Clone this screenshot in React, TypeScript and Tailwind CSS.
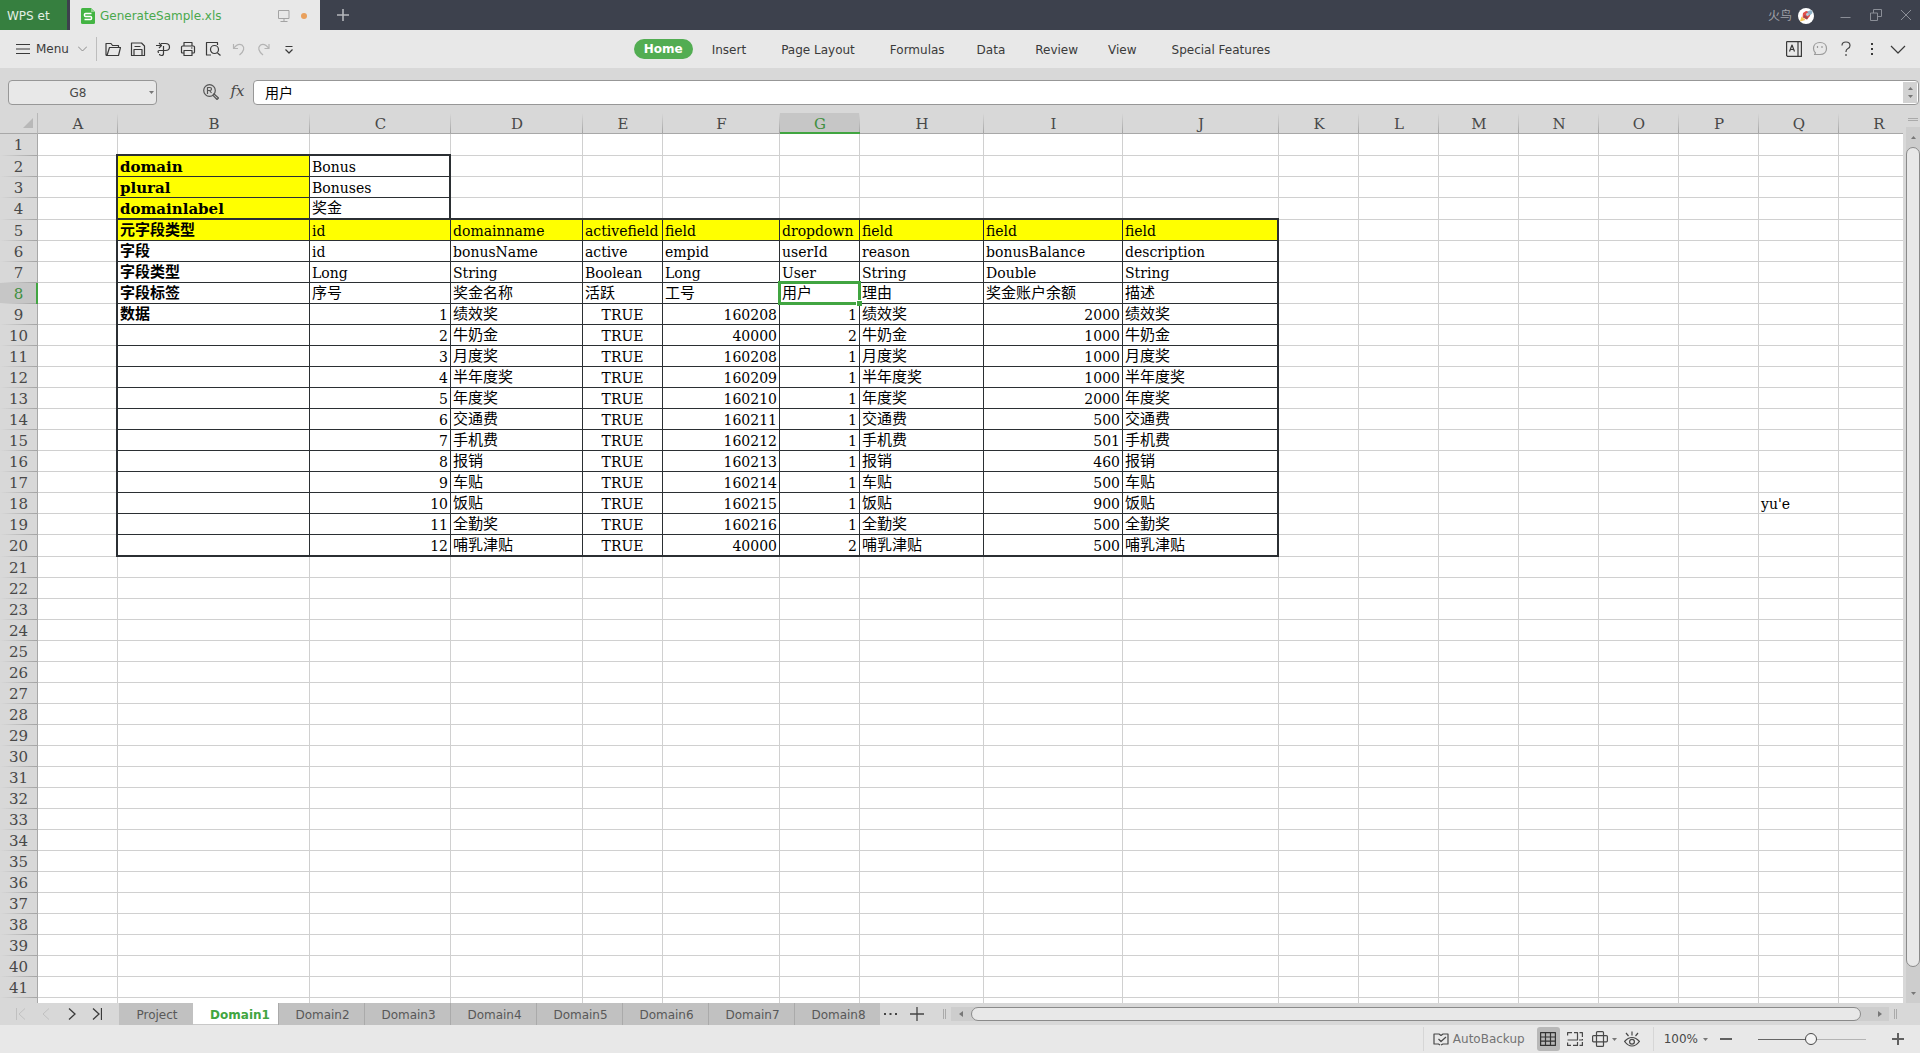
import React from "react";

const ui = "font-['DejaVu_Sans','Noto_Sans_CJK_SC',sans-serif]";

const columns = [
  { name: "A", width: "w-[80px]" },
  { name: "B", width: "w-[192px]" },
  { name: "C", width: "w-[141px]" },
  { name: "D", width: "w-[132px]" },
  { name: "E", width: "w-[80px]" },
  { name: "F", width: "w-[117px]" },
  { name: "G", width: "w-[80px]" },
  { name: "H", width: "w-[124px]" },
  { name: "I", width: "w-[139px]" },
  { name: "J", width: "w-[156px]" },
  { name: "K", width: "w-[80px]" },
  { name: "L", width: "w-[80px]" },
  { name: "M", width: "w-[80px]" },
  { name: "N", width: "w-[80px]" },
  { name: "O", width: "w-[80px]" },
  { name: "P", width: "w-[80px]" },
  { name: "Q", width: "w-[80px]" },
  { name: "R", width: "" },
];

const ROW_COUNT = 41;

const cells: Record<number, Record<string, string>> = {
  2: { B: "domain", C: "Bonus" },
  3: { B: "plural", C: "Bonuses" },
  4: { B: "domainlabel", C: "奖金" },
  5: { B: "元字段类型", C: "id", D: "domainname", E: "activefield", F: "field", G: "dropdown", H: "field", I: "field", J: "field" },
  6: { B: "字段", C: "id", D: "bonusName", E: "active", F: "empid", G: "userId", H: "reason", I: "bonusBalance", J: "description" },
  7: { B: "字段类型", C: "Long", D: "String", E: "Boolean", F: "Long", G: "User", H: "String", I: "Double", J: "String" },
  8: { B: "字段标签", C: "序号", D: "奖金名称", E: "活跃", F: "工号", G: "用户", H: "理由", I: "奖金账户余额", J: "描述" },
};

const records: [string, string, string, string][] = [
  ["绩效奖", "160208", "1", "2000"],
  ["牛奶金", "40000", "2", "1000"],
  ["月度奖", "160208", "1", "1000"],
  ["半年度奖", "160209", "1", "1000"],
  ["年度奖", "160210", "1", "2000"],
  ["交通费", "160211", "1", "500"],
  ["手机费", "160212", "1", "501"],
  ["报销", "160213", "1", "460"],
  ["车贴", "160214", "1", "500"],
  ["饭贴", "160215", "1", "900"],
  ["全勤奖", "160216", "1", "500"],
  ["哺乳津贴", "40000", "2", "500"],
];

records.forEach(([name, emp, user, balance], i) => {
  cells[9 + i] = { C: String(i + 1), D: name, E: "TRUE", F: emp, G: user, H: name, I: balance, J: name };
});
cells[9].B = "数据";
cells[18].Q = "yu'e";

function edgeShadow(row: number, col: string) {
  if (col === "B") {
    if (row === 2) return "shadow-[-2px_0_0_#2b2f33,0_-2px_0_#2b2f33,-2px_-2px_0_#2b2f33]";
    if (row === 5) return "shadow-[-2px_0_0_#2b2f33,0_-2px_0_#2b2f33]";
    if (row === 20) return "shadow-[-2px_0_0_#2b2f33,inset_0_-1px_0_#2b2f33]";
    return "shadow-[-2px_0_0_#2b2f33]";
  }
  if (col === "C" && row === 2) return "shadow-[0_-2px_0_#2b2f33,inset_-1px_0_0_#2b2f33]";
  if (col === "C" && row < 5) return "shadow-[inset_-1px_0_0_#2b2f33]";
  if (col === "J" && row === 5) return "shadow-[0_-2px_0_#2b2f33,inset_-1px_0_0_#2b2f33]";
  if (col === "J" && row === 20) return "shadow-[inset_-1px_-1px_0_#2b2f33]";
  if (col === "J") return "shadow-[inset_-1px_0_0_#2b2f33]";
  if (row === 5) return "shadow-[0_-2px_0_#2b2f33]";
  if (row === 20) return "shadow-[inset_0_-1px_0_#2b2f33]";
  return "";
}

function Cell({ row, col }: { row: number; col: string }) {
  const text = cells[row]?.[col] ?? "";
  const inTable = (row >= 2 && row <= 4 && (col === "B" || col === "C")) || (row >= 5 && row <= 20 && col >= "B" && col <= "J");
  const yellow = (row === 5 && inTable) || (row >= 2 && row <= 4 && col === "B");
  const numeric = row >= 9 && /^\d+$/.test(text);
  const cjk = /[\u4e00-\u9fff]/.test(text);
  const selected = row === 8 && col === "G";
  return (
    <td
      className={[
        "relative p-0 border-r border-b align-top whitespace-nowrap",
        inTable ? "border-[#2b2f33]" : "border-[#d0d0d0]",
        inTable ? edgeShadow(row, col) : "",
        yellow ? "bg-[#ffff00]" : inTable ? "bg-white" : "",
        numeric ? "text-right" : text === "TRUE" ? "text-center" : "text-left",
      ].join(" ")}
    >
      <div
        className={[
          "h-5 px-[2px] text-black",
          cjk ? "font-['Noto_Sans_CJK_SC',sans-serif] leading-[18px]" : "font-['DejaVu_Serif',serif] leading-[22px]",
          col === "B" ? "text-[15px] font-bold" : cjk ? "text-[15px]" : "text-[14px]",
        ].join(" ")}
      >
        {text}
      </div>
      {selected && (
        <div className="absolute -inset-[2px] z-10 border-[3px] border-[#41a541]">
          <span className="absolute -right-1 -bottom-1 size-[6px] border-t border-l border-white bg-[#41a541]" />
        </div>
      )}
    </td>
  );
}

function Sheet() {
  return (
    <table className="w-[calc(100%+16px)] table-fixed border-separate border-spacing-0 font-['DejaVu_Serif',serif] text-[15px] text-[#484848]">
      <colgroup>
        <col className="w-[38px]" />
        {columns.map((c) => (
          <col key={c.name} className={c.width} />
        ))}
      </colgroup>
      <thead>
        <tr className="h-[21px] bg-[#d8d8d8]">
          <th className="border-r border-b border-r-[#b8b8b8] border-b-[#a8a8a8] p-0" aria-label="Select all">
            <svg className="ml-[23px] block" width="10" height="10" viewBox="0 0 10 10">
              <path d="M10 0V10H0Z" fill="#b8b8b8" />
            </svg>
          </th>
          {columns.map((c) => (
            <th
              key={c.name}
              className={[
                "border-b p-0 text-center align-top text-[15px] font-normal bg-[linear-gradient(to_bottom,#d8d8d8,#a4a4a4)] bg-[length:1px_100%] bg-right bg-no-repeat",
                c.name === "G" ? "border-[#41a541] bg-[#c6c6c6] text-[#3f8f3f] shadow-[inset_0_-1px_0_#41a541]" : "border-[#a8a8a8]",
              ].join(" ")}
            >
              <div className="h-5 leading-[22px]">{c.name}</div>
            </th>
          ))}
        </tr>
      </thead>
      <tbody>
        {Array.from({ length: ROW_COUNT }, (_, i) => i + 1).map((row) => (
          <tr key={row} className={row === 1 || row === 4 || row === 20 ? "h-[22px]" : "h-[21px]"}>
            <th
              className={[
                "border-r p-0 text-center align-top text-[15px] font-normal bg-[linear-gradient(to_right,#d8d8d8,#a4a4a4)] bg-[length:100%_1px] bg-bottom bg-no-repeat",
                row === 8
                  ? "border-[#41a541] bg-[#c6c6c6] text-[#3f8f3f] shadow-[inset_-1px_0_0_#41a541]"
                  : "border-[#a8a8a8] bg-[#d8d8d8]",
              ].join(" ")}
            >
              <div className="h-5 leading-[22px]">{row}</div>
            </th>
            {columns.map((c) => (
              <Cell key={c.name} row={row} col={c.name} />
            ))}
          </tr>
        ))}
        <tr className="h-[21px]">
          <th className="border-r border-[#a8a8a8] bg-[#d8d8d8] p-0" />
          {columns.map((c) => (
            <td key={c.name} className="border-r border-[#d0d0d0] p-0" />
          ))}
        </tr>
      </tbody>
    </table>
  );
}

type IconProps = { children: React.ReactNode; size?: string; box?: string; className?: string };
function Icon({ children, size = "size-4", box = "0 0 16 16", className = "" }: IconProps) {
  return (
    <svg className={`${size} shrink-0 ${className}`} viewBox={box} fill="none" stroke="currentColor" strokeWidth="1.2" strokeLinejoin="round">
      {children}
    </svg>
  );
}

function TitleBar() {
  return (
    <header className="flex h-[30px] shrink-0 items-stretch bg-[#3d414d] text-[12px]">
      <button className="w-[67px] bg-[#367f3f] pt-[2px] pl-[7px] text-left text-[#e3efe4]">WPS et</button>
      <div className="ml-[3px] flex w-[250px] items-center bg-[#e8e8e8] pt-[2px] pl-[11px]">
        <svg width="14" height="16" viewBox="0 0 14 16">
          <path d="M1.500 0H10L14 4V14.500Q14 16 12.500 16H1.500Q0 16 0 14.500V1.500Q0 0 1.500 0Z" fill="#43b443" />
          <path d="M10 0V4H14Z" fill="#8fd28f" />
          <path d="M10.500 5.500H4.500Q3.500 5.500 3.500 6.500V7.500Q3.500 8.500 4.500 8.500H9.500Q10.500 8.500 10.500 9.500V10.500Q10.500 11.500 9.500 11.500H3.500" fill="none" stroke="#fff" strokeWidth="1.500" />
        </svg>
        <span className="ml-[5px] text-[#4aa84d]">GenerateSample.xls</span>
        <svg className="ml-auto" width="12" height="12" viewBox="0 0 12 12" fill="none" stroke="#a3a3a3">
          <path d="M1 .5H11V8.500H.5V.5ZM6 8.500V11.500M2.500 11.500H9.500" />
        </svg>
        <span className="mr-[13px] ml-[11px] size-[6px] rounded-full bg-[#e9a05c]" />
      </div>
      <button aria-label="New tab" className="ml-[16px] text-[#b5b7bc]">
        <svg width="14" height="14" viewBox="0 0 14 14" stroke="currentColor" strokeWidth="1.600">
          <path d="M7 1V13M1 7H13" />
        </svg>
      </button>
      <div className="ml-auto flex items-center text-[#8b8e97]">
        <span className="pt-[2px] text-[#a0a2a9]">火鸟</span>
        <svg className="mt-px ml-[6px]" width="16" height="16" viewBox="0 0 16 16">
          <circle cx="8" cy="8" r="8" fill="#fff" />
          <path d="M5 5L8 3L12 3.500L12 8L9 11.500L4.500 9.500Z" fill="#e2504a" />
          <path d="M9 3.500L13.500 2L14.500 5L12 7.500Z" fill="#8fb2c8" />
          <path d="M6.500 7L10 9.500L9 11.500L5.500 9Z" fill="#9a4a50" />
          <circle cx="9.500" cy="6.500" r="1.400" fill="#a9d3e8" />
          <path d="M2 13.500L3.500 8.500L7.500 12Z" fill="#f6c553" />
        </svg>
        <button aria-label="Minimize" className="ml-[26px]">
          <svg width="11" height="16" viewBox="0 0 11 16" stroke="currentColor"><path d="M.5 10.500H10.500" /></svg>
        </button>
        <button aria-label="Restore" className="ml-[19px]">
          <svg width="12" height="12" viewBox="0 0 12 12" fill="none" stroke="currentColor">
            <path d="M1.500 4H7.500V11.500H.5V4ZM3.500 4V.5H11.500V7.500H7.500" />
          </svg>
        </button>
        <button aria-label="Close" className="mr-[9px] ml-[19px]">
          <svg width="10" height="10" viewBox="0 0 10 10" stroke="currentColor"><path d="M0 0L10 10M10 0L0 10" /></svg>
        </button>
      </div>
    </header>
  );
}

const menus = [
  { name: "Insert", pad: "" },
  { name: "Page Layout", pad: "px-[5px]" },
  { name: "Formulas", pad: "" },
  { name: "Data", pad: "pl-[2px]" },
  { name: "Review", pad: "" },
  { name: "View", pad: "" },
  { name: "Special Features", pad: "pl-[5px]" },
];

function MenuBar() {
  return (
    <div className="flex h-[38px] shrink-0 items-center bg-[#e8e8e8] text-[12px] text-[#3a3a3a]">
      <div className="flex flex-1 basis-0 items-center pl-4">
        <button className="flex items-center gap-[6px]">
          <svg width="14" height="10" viewBox="0 0 14 10" stroke="currentColor"><path d="M0 .5H14M0 5H14M0 9.500H14" /></svg>
          Menu
          <svg className="ml-[3px] text-[#8a8a8a]" width="9" height="6" viewBox="0 0 9 6" fill="none" stroke="currentColor"><path d="M0 .5L4.500 5L9 .5" /></svg>
        </button>
        <span className="ml-[9px] h-6 w-px bg-[#bdbdbd]" />
        <div className="ml-[8px] flex items-center gap-[9px]">
          <button aria-label="Open">
            <Icon><path d="M3 14.500H2Q1 14.500 1 13.500V2.500H6L7.500 4.500H13.500V6.500M2 14.500L4.500 6.500H15.500L13.500 14.500H2" /></Icon>
          </button>
          <button aria-label="Save">
            <Icon><path d="M1.500 2H11.500L14.500 5V14.500H1.500ZM4 14.500V8.500H12V14.500M4.500 5.500H10.500" /></Icon>
          </button>
          <button aria-label="Export">
            <Icon><path d="M1 4.500H6.500M4 2L6.500 4.500L4 7M6 2.500H10.500Q14.500 2.500 14.500 6T10.500 9.500H4Q3 9.500 3 10.500T4 11.500M8.500 5V12.500Q8.500 14.500 6.500 14.500T4.500 13" /></Icon>
          </button>
          <button aria-label="Print">
            <Icon><path d="M4 5V1.500H12V5M4 12H2.500Q1.500 12 1.500 11V6Q1.500 5 2.500 5H13.500Q14.500 5 14.500 6V11Q14.500 12 13.500 12H12M4 9.500H12V14.500H4ZM11 7H12.500" /></Icon>
          </button>
          <button aria-label="Print preview">
            <Icon><path d="M6 14H1.500V1.500H12.500V4M12.500 12L15.500 14.500" /><circle cx="9.500" cy="8.500" r="4" /></Icon>
          </button>
          <button aria-label="Undo" className="ml-[1px] text-[#b4b4b4]">
            <Icon><path d="M2.500 3V7.500H7M2.500 7.500Q7 1.500 11 4Q15.500 8 8.500 14" /></Icon>
          </button>
          <button aria-label="Redo" className="text-[#b4b4b4]">
            <Icon><path d="M13 3V7.500H8.500M13 7.500Q8.500 1.500 4.500 4Q0 8 7 14" /></Icon>
          </button>
          <button aria-label="More tools">
            <Icon><path d="M4.500 5.500H11.500M4.500 8.500L8 12L11.500 8.500" /></Icon>
          </button>
        </div>
      </div>
      <nav className="mr-[18px] flex items-center gap-[30px]">
        <button className="-mr-[11px] h-5 rounded-full bg-[#52ad52] px-[10px] font-bold text-white">Home</button>
        {menus.map((m) => (
          <button key={m.name} className={`pt-px ${m.pad}`}>{m.name}</button>
        ))}
      </nav>
      <div className="flex flex-1 basis-0 items-center justify-end pr-[14px]">
        <button aria-label="Translate">
          <Icon><path d="M1 .6H15.400V15.400H1.500L.6 14.500V1ZM12 .6V15.400M3.500 10.500L6 4L8.500 10.500M4.500 8.500H7.500" /></Icon>
        </button>
        <button aria-label="Feedback" className="ml-[10px] text-[#9a9a9a]">
          <Icon><path d="M8 1.500C12 1.500 14.500 4 14.500 7.500S12 13.500 8 13.500H2.500L3.500 12Q1.500 10 1.500 7.500C1.500 4 4 1.500 8 1.500ZM5.500 5V7M10 5V7" /></Icon>
        </button>
        <button aria-label="Help" className="ml-[10px]">
          <Icon className="text-[#444]"><path d="M4 4.500Q4 1 8 1T12 4.500Q12 6.500 10 7.500T8 10.500V11M8 13V15" /></Icon>
        </button>
        <button aria-label="More" className="ml-[10px]">
          <Icon><path d="M8 2V4M8 7V9M8 12V14" strokeWidth="2" /></Icon>
        </button>
        <button aria-label="Collapse ribbon" className="ml-[10px]">
          <Icon><path d="M1 5L8 12L15 5" /></Icon>
        </button>
      </div>
    </div>
  );
}

function FormulaBar() {
  return (
    <div className="flex h-[45px] shrink-0 items-start bg-[#d8d8d8] pt-3 pr-px pl-2">
      <div className="flex h-[25px] w-[149px] items-center rounded-[4px] border border-[#979797] bg-[#e8e8e8]">
        <input aria-label="Name box" defaultValue="G8" className="min-w-0 flex-1 bg-transparent pr-[2px] text-center text-[12px] text-[#484848] outline-none" />
        <button aria-label="Cell names" className="pr-[2px]">
          <svg width="5" height="3" viewBox="0 0 5 3"><path d="M0 0H5L2.500 3Z" fill="#777" /></svg>
        </button>
      </div>
      <button aria-label="Find" className="mt-1 ml-[46px] text-[#555]">
        <Icon>
          <circle cx="6.500" cy="6.500" r="5.800" />
          <path d="M4.500 10V3.500H7Q8.500 3.500 8.500 5T7 6.500H4.500M6.500 6.500L8.500 9M10.500 9.500L15.500 14L14 15.500L9.500 10.800" />
        </Icon>
      </button>
      <button aria-label="Insert function" className="ml-[10px] h-[22px] w-[17px] font-['DejaVu_Serif',serif] text-[15px] italic leading-[22px] text-[#484848]">fx</button>
      <div className="ml-[7px] flex h-[25px] flex-1 items-stretch rounded-[4px] border border-[#979797] bg-white p-px">
        <input aria-label="Formula" defaultValue="用户" className="min-w-0 flex-1 bg-transparent pl-[10px] font-['Noto_Sans_CJK_SC',sans-serif] text-[14px] text-black outline-none" />
        <div className="flex w-[14px] flex-col items-center justify-center gap-[5px] bg-[#d2d2d2]">
          <svg width="5" height="3" viewBox="0 0 5 3"><path d="M0 3H5L2.500 0Z" fill="#777" /></svg>
          <svg width="5" height="3" viewBox="0 0 5 3"><path d="M0 0H5L2.500 3Z" fill="#777" /></svg>
        </div>
      </div>
    </div>
  );
}

function VerticalScroll() {
  return (
    <div className="flex w-[17px] shrink-0 flex-col bg-[#d8d8d8] pl-[3px]">
      <div className="mt-[5px] ml-[2px] h-[3px] w-[10px] border-y border-[#aaa]" />
      <div className="mt-[6px] flex flex-1 flex-col items-center bg-[#cdcdcd]">
        <button aria-label="Scroll up" className="flex h-5 w-full items-center justify-center">
          <svg width="5" height="3" viewBox="0 0 5 3"><path d="M0 3H5L2.500 0Z" fill="#777" /></svg>
        </button>
        <div className="w-[14px] flex-1 rounded-full border border-[#8a8a8a] bg-[#e8e8e8]" />
        <button aria-label="Scroll down" className="flex h-9 w-full items-center justify-center pt-4">
          <svg width="5" height="3" viewBox="0 0 5 3"><path d="M0 0H5L2.500 3Z" fill="#777" /></svg>
        </button>
      </div>
    </div>
  );
}

const otherTabs = ["Domain2", "Domain3", "Domain4", "Domain5", "Domain6", "Domain7", "Domain8"];

function SheetTabs() {
  return (
    <div className="flex h-[22px] shrink-0 items-stretch bg-[#d8d8d8] text-[12px] text-[#585858]">
      <div className="flex w-[119px] items-center pl-4 text-[#3a3a3a]">
        <button aria-label="First sheet" className="text-[#c0c0c0]"><svg width="10" height="12" viewBox="0 0 10 12" fill="none" stroke="currentColor"><path d="M.5 0V12M9 .5L3 6L9 11.500" /></svg></button>
        <button aria-label="Previous sheet" className="ml-4 text-[#c0c0c0]"><svg width="8" height="12" viewBox="0 0 8 12" fill="none" stroke="currentColor"><path d="M7 .5L1 6L7 11.500" /></svg></button>
        <button aria-label="Next sheet" className="ml-[18px]"><svg width="8" height="12" viewBox="0 0 8 12" fill="none" stroke="currentColor" strokeWidth="1.300"><path d="M1 .5L7 6L1 11.500" /></svg></button>
        <button aria-label="Last sheet" className="ml-4"><svg width="10" height="12" viewBox="0 0 10 12" fill="none" stroke="currentColor" strokeWidth="1.300"><path d="M9.500 0V12M1 .5L7 6L1 11.500" /></svg></button>
      </div>
      <button className="w-[74px] bg-[#c1c1c1] pt-px pl-[2px]">Project</button>
      <button className="w-[85px] border-b border-[#c8c8c8] bg-white pt-[2px] pl-[9px] font-bold text-[#41a541]">Domain1</button>
      {otherTabs.map((t) => (
        <button key={t} className="w-[86px] border-l border-[#aaa] bg-[#c1c1c1] pt-px pl-[2px]">{t}</button>
      ))}
      <div className="flex w-[66px] items-center pl-1 text-[#444]">
        <button aria-label="All sheets"><svg width="13" height="2" viewBox="0 0 13 2" fill="currentColor"><path d="M0 0H2V2H0ZM5.500 0H7.500V2H5.500ZM11 0H13V2H11Z" /></svg></button>
        <button aria-label="Add sheet" className="ml-[13px]"><svg width="14" height="14" viewBox="0 0 14 14" stroke="currentColor" strokeWidth="1.300"><path d="M7 0V14M0 7H14" /></svg></button>
        <span className="ml-auto h-[10px] w-[3px] border-x border-[#aaa]" />
      </div>
      <div className="ml-[5px] flex flex-1 items-center">
        <div className="flex h-[14px] flex-1 items-center bg-[#cdcdcd]">
          <button aria-label="Scroll left" className="flex w-5 justify-center"><svg width="4" height="6" viewBox="0 0 4 6"><path d="M4 0V6L0 3Z" fill="#777" /></svg></button>
          <div className="h-[14px] flex-1 rounded-full border border-[#8a8a8a] bg-[#e8e8e8]" />
          <button aria-label="Scroll right" className="flex w-7 justify-end pr-[7px]"><svg width="4" height="6" viewBox="0 0 4 6"><path d="M0 0V6L4 3Z" fill="#777" /></svg></button>
        </div>
        <span className="mr-[23px] ml-[5px] h-[10px] w-[3px] border-x border-[#aaa]" />
      </div>
    </div>
  );
}

function StatusBar() {
  return (
    <footer className="flex h-7 shrink-0 items-center justify-end bg-[#e8e8e8] pr-4 text-[12px] text-[#484848]">
      <span className="h-6 w-px bg-[#d6d6d6]" />
      <button className="ml-[9px] flex items-center gap-1 text-[#737373]">
        <Icon className="text-[#484848]"><path d="M7 14L5.500 13H1V3H6L8 4.500L10 3H15V13H10L8 14M5.500 8L8 10.500L13 6" /></Icon>
        AutoBackup
      </button>
      <button aria-label="Normal view" className="ml-3 flex h-6 w-[23px] items-center justify-center rounded-[3px] bg-[#b8b8b8]">
        <Icon className="text-[#333]"><path d="M.6 1.600H15.400V14.400H.6ZM.6 6H15.400M.6 10.200H15.400M5.500 1.600V14.400M10.500 1.600V14.400" /></Icon>
      </button>
      <button aria-label="Page break preview" className="ml-[7px]">
        <Icon><path d="M5 1.600H.6V4.500M7 1.600H10.500V9H.6M12.500 1.600H15.400V6M15.400 8V9H12M.6 11.500V14.400H4M6 14.400H10.500V11M12.500 14.400H15.400V11" /></Icon>
      </button>
      <button aria-label="Page layout view" className="ml-[9px] flex items-center gap-1">
        <Icon><path d="M5.500 .6H10.500Q11.500 .6 11.500 1.600V14.400Q11.500 15.400 10.500 15.400H5.500Q4.500 15.400 4.500 14.400V1.600Q4.500 .6 5.500 .6ZM1.600 4.600H14.400Q15.400 4.600 15.400 5.600V9.800Q15.400 10.800 14.400 10.800H1.600Q.6 10.800 .6 9.800V5.600Q.6 4.600 1.600 4.600Z" /></Icon>
        <svg width="5" height="3" viewBox="0 0 5 3"><path d="M0 0H5L2.500 3Z" fill="#777" /></svg>
      </button>
      <button aria-label="Reading layout" className="ml-[7px]">
        <Icon><path d="M.6 10.500Q4 6.500 8 6.500T15.400 10.500Q12 15 8 15T.6 10.500ZM2 2L4.500 5M8 .5V4.500M14 2L11.500 5" /><circle cx="8" cy="10.700" r="2.400" /></Icon>
      </button>
      <span className="ml-[13px] h-6 w-px bg-[#d6d6d6]" />
      <button className="ml-[10px] flex items-center gap-[5px]">
        100%
        <svg width="5" height="3" viewBox="0 0 5 3"><path d="M0 0H5L2.500 3Z" fill="#777" /></svg>
      </button>
      <button aria-label="Zoom out" className="ml-3"><svg width="12" height="12" viewBox="0 0 12 12" stroke="#606060" strokeWidth="2"><path d="M0 6H12" /></svg></button>
      <input
        type="range"
        aria-label="Zoom"
        defaultValue="49"
        className="mx-[26px] h-3 w-[108px] appearance-none bg-[linear-gradient(to_right,#666_50%,#b4b4b4_50%)] bg-[length:100%_1px] bg-center bg-no-repeat [&::-webkit-slider-thumb]:size-3 [&::-webkit-slider-thumb]:appearance-none [&::-webkit-slider-thumb]:rounded-full [&::-webkit-slider-thumb]:border [&::-webkit-slider-thumb]:border-[#484848] [&::-webkit-slider-thumb]:bg-[#f4f4f4]"
      />
      <button aria-label="Zoom in"><svg width="12" height="12" viewBox="0 0 12 12" stroke="#606060" strokeWidth="2"><path d="M0 6H12M6 0V12" /></svg></button>
    </footer>
  );
}

export default function App() {
  return (
    <div className={`flex h-screen flex-col overflow-hidden ${ui}`}>
      <TitleBar />
      <MenuBar />
      <FormulaBar />
      <main className="flex min-h-0 flex-1">
        <div className="min-w-0 flex-1 overflow-hidden bg-white">
          <Sheet />
        </div>
        <VerticalScroll />
      </main>
      <SheetTabs />
      <StatusBar />
    </div>
  );
}
